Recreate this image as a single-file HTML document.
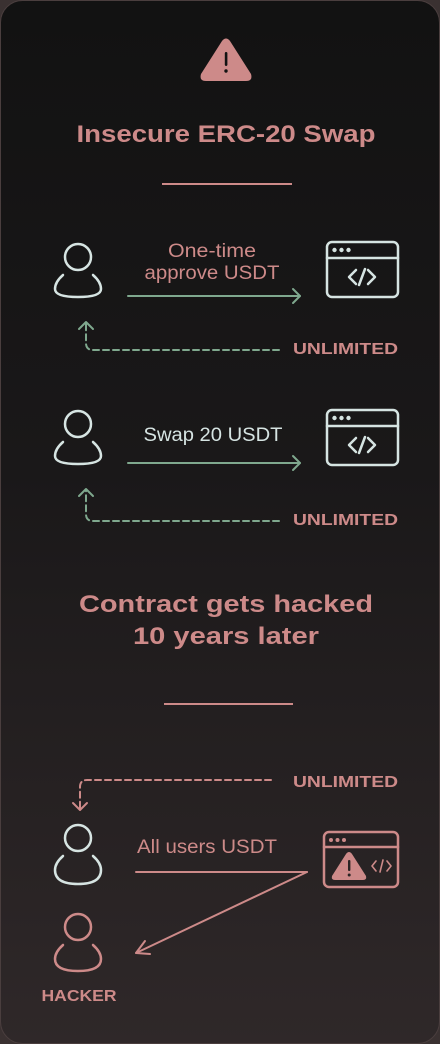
<!DOCTYPE html>
<html><head><meta charset="utf-8"><style>
html,body{margin:0;padding:0;background:#3a3131;}
body{width:440px;height:1044px;overflow:hidden;}
svg{display:block}
text{font-family:"Liberation Sans",sans-serif;}
</style></head><body>
<svg width="440" height="1044" viewBox="0 0 440 1044" xmlns="http://www.w3.org/2000/svg">
<defs>
<linearGradient id="bg" x1="0" y1="0" x2="0" y2="1">
<stop offset="0" stop-color="#121212"/><stop offset="0.45" stop-color="#1a1819"/><stop offset="1" stop-color="#2f2829"/>
</linearGradient>
</defs>
<rect x="0" y="0" width="440" height="1044" fill="#3a3131"/>
<rect x="0.5" y="0.5" width="439" height="1043" rx="22" fill="url(#bg)" stroke="#4a3e3e"/>

<path d="M222 41 Q226 36 230 41 L251 74 Q253 81 246 81 L206 81 Q199 81 201 74 Z" fill="#cd8a89"/>
<rect x="224.8" y="52" width="2.6" height="14" rx="1.2" fill="#121212"/>
<circle cx="226" cy="71" r="1.7" fill="#121212"/>
<text x="226" y="142" text-anchor="middle" font-size="24" font-weight="bold" fill="#cd8a89" textLength="299" lengthAdjust="spacingAndGlyphs">Insecure ERC-20 Swap</text>
<line x1="162" y1="184" x2="292" y2="184" stroke="#cd8a89" stroke-width="2"/>

<g fill="none" stroke-linecap="round" stroke-linejoin="round">
<g stroke="#d6e4e2" stroke-width="2.5">
<circle cx="78" cy="257" r="13"/>
<path d="M63 275 Q55 282 55 289 Q55 297 78 297 Q101 297 101 289 Q101 282 93 275"/>
<rect x="327" y="242" width="71" height="55" rx="5"/>
<line x1="327" y1="258" x2="398" y2="258"/>
<path d="M356 270 L349 277 L356 284 M368 270 L375 277 L368 284 M365 269 L359 285"/>
</g>
<g stroke="#7fa88e" stroke-width="2">
<line x1="128" y1="296" x2="300" y2="296"/>
<path d="M293 289 L300 296 L293 303"/>
<path d="M279 350 L93 350 Q86 350 86 343 L86 324" stroke-dasharray="6 4"/>
<path d="M79 329 L86 322 L93 329"/>
</g>

<g stroke="#d6e4e2" stroke-width="2.5">
<circle cx="78" cy="424" r="13"/>
<path d="M63 442 Q55 449 55 456 Q55 464 78 464 Q101 464 101 456 Q101 449 93 442"/>
<rect x="327" y="410" width="71" height="55" rx="5"/>
<line x1="327" y1="426" x2="398" y2="426"/>
<path d="M356 438 L349 445 L356 452 M368 438 L375 445 L368 452 M365 437 L359 453"/>
</g>
<g stroke="#7fa88e" stroke-width="2">
<line x1="128" y1="463" x2="300" y2="463"/>
<path d="M293 456 L300 463 L293 470"/>
<path d="M279 521 L93 521 Q86 521 86 514 L86 491" stroke-dasharray="6 4"/>
<path d="M79 496 L86 489 L93 496"/>
</g>

<g stroke="#cd8a89" stroke-width="2">
<path d="M271 780 L87 780 Q80 780 80 787 L80 808" stroke-dasharray="6 4"/>
<path d="M73 803 L80 810 L87 803"/>
<line x1="136" y1="872" x2="307" y2="872"/>
<path d="M307 872 L136 953"/>
<path d="M145 941 L136 953 L150 954"/>
</g>
<g stroke="#d6e4e2" stroke-width="2.5">
<circle cx="78" cy="838" r="13"/>
<path d="M63 856 Q55 863 55 870 Q55 884 78 884 Q101 884 101 870 Q101 863 93 856"/>
</g>
<g stroke="#cd8a89" stroke-width="2.5">
<circle cx="78" cy="927" r="13"/>
<path d="M63 945 Q55 952 55 959 Q55 971 78 971 Q101 971 101 959 Q101 952 93 945"/>
<rect x="324" y="832" width="74" height="55" rx="5"/>
<line x1="324" y1="847" x2="398" y2="847"/>
</g>
<path d="M376 861 L372 866 L376 871 M387 861 L391 866 L387 871 M383 860 L380 872" stroke="#cd8a89" stroke-width="1.6"/>
</g>
<g fill="#d6e4e2"><circle cx="334.5" cy="250" r="2.2"/><circle cx="341.5" cy="250" r="2.2"/><circle cx="348.5" cy="250" r="2.2"/></g>
<g fill="#cd8a89"><circle cx="331" cy="840" r="2"/><circle cx="337.5" cy="840" r="2"/><circle cx="344" cy="840" r="2"/></g>
<g fill="#d6e4e2"><circle cx="334.5" cy="418" r="2.2"/><circle cx="341.5" cy="418" r="2.2"/><circle cx="348.5" cy="418" r="2.2"/></g>
<path d="M346 854 Q349 850 352 854 L366 876 Q367 880 363 880 L335 880 Q331 880 332 876 Z" fill="#cd8a89"/>
<rect x="348" y="860" width="2.4" height="11" rx="1" fill="#2a2424"/>
<circle cx="349.2" cy="875" r="1.5" fill="#2a2424"/>

<text x="212" y="257" text-anchor="middle" font-size="19" fill="#cd8a89" textLength="88" lengthAdjust="spacingAndGlyphs">One-time</text>
<text x="212" y="279" text-anchor="middle" font-size="19" fill="#cd8a89" textLength="135" lengthAdjust="spacingAndGlyphs">approve USDT</text>
<text x="398" y="354" text-anchor="end" font-size="16" font-weight="bold" fill="#cd8a89" textLength="105" lengthAdjust="spacingAndGlyphs">UNLIMITED</text>
<text x="213" y="441" text-anchor="middle" font-size="19" fill="#d6e4e2" textLength="139" lengthAdjust="spacingAndGlyphs">Swap 20 USDT</text>
<text x="398" y="525" text-anchor="end" font-size="16" font-weight="bold" fill="#cd8a89" textLength="105" lengthAdjust="spacingAndGlyphs">UNLIMITED</text>
<text x="226" y="612" text-anchor="middle" font-size="24" font-weight="bold" fill="#cd8a89" textLength="294" lengthAdjust="spacingAndGlyphs">Contract gets hacked</text>
<text x="226" y="644" text-anchor="middle" font-size="24" font-weight="bold" fill="#cd8a89" textLength="186" lengthAdjust="spacingAndGlyphs">10 years later</text>
<line x1="164" y1="704" x2="293" y2="704" stroke="#cd8a89" stroke-width="2"/>
<text x="398" y="787" text-anchor="end" font-size="16" font-weight="bold" fill="#cd8a89" textLength="105" lengthAdjust="spacingAndGlyphs">UNLIMITED</text>
<text x="137" y="853" font-size="19" fill="#cd8a89" textLength="140" lengthAdjust="spacingAndGlyphs">All users USDT</text>
<text x="79" y="1001" text-anchor="middle" font-size="16" font-weight="bold" fill="#cd8a89" textLength="75" lengthAdjust="spacingAndGlyphs">HACKER</text>
</svg>
</body></html>
